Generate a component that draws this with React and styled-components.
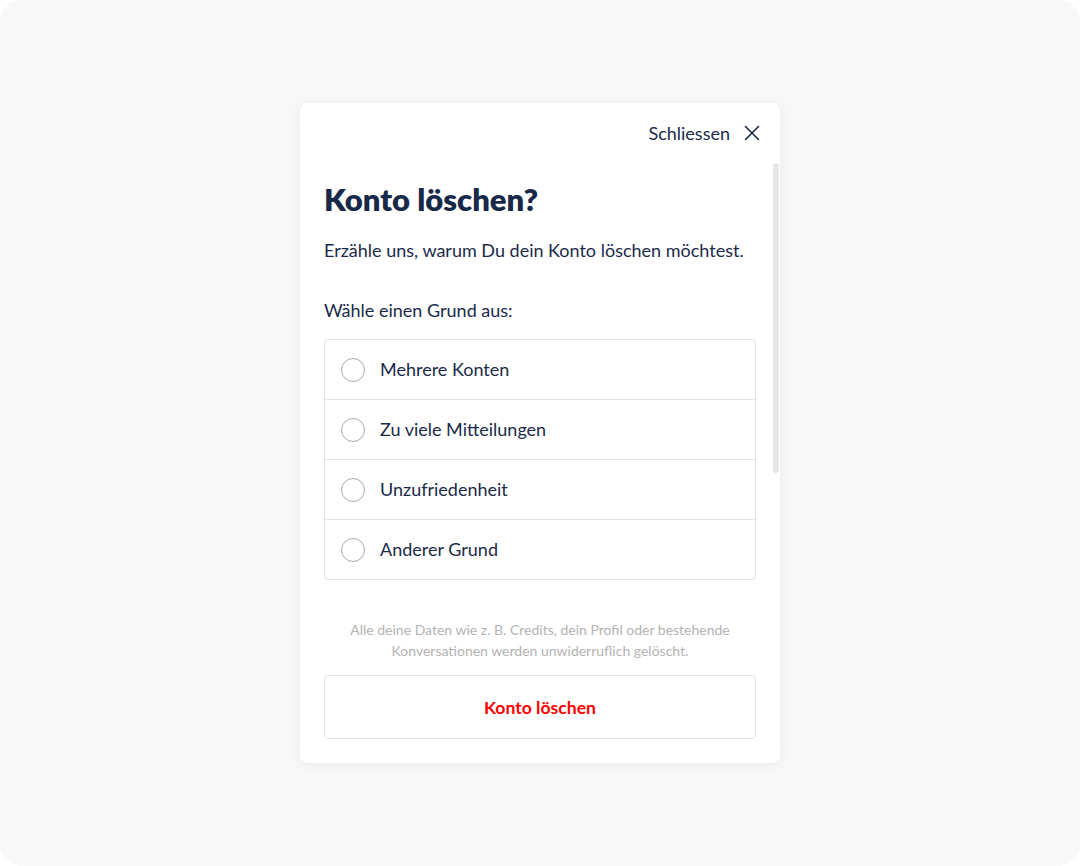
import React from "react";
import styled, { createGlobalStyle } from "styled-components";

const Global = createGlobalStyle`
  html, body { margin: 0; padding: 0; background: #ffffff; }
  body { font-family: "Lato", "Open Sans", sans-serif; -webkit-font-smoothing: antialiased; }
  * { box-sizing: border-box; }
`;

const Page = styled.div`
  width: 1080px;
  height: 866px;
  background: #f8f8f8;
  border-radius: 22px;
  display: flex;
  justify-content: center;
  align-items: flex-start;
  padding-top: 103px;
`;

const Modal = styled.div`
  position: relative;
  width: 480px;
  background: #ffffff;
  border-radius: 8px;
  box-shadow: 0 2px 12px rgba(0, 0, 0, 0.06);
  display: flex;
  flex-direction: column;
`;

const Header = styled.div`
  height: 60px;
  display: flex;
  align-items: center;
  justify-content: flex-end;
  padding-right: 20px;
  gap: 14px;
`;

const CloseLabel = styled.span`
  font-size: 18px;
  color: #1b2a4a;
`;

const Scrollbar = styled.div`
  position: absolute;
  right: 1px;
  top: 60px;
  width: 6px;
  height: 310px;
  border-radius: 3px;
  background: #e6e6e6;
`;

const Body = styled.div`
  padding: 16px 24px 24px 24px;
  display: flex;
  flex-direction: column;
`;

const Title = styled.h1`
  margin: 0;
  font-size: 31px;
  line-height: 40px;
  font-weight: 800;
  color: #172849;
`;

const Text = styled.p`
  margin: ${(p) => p.$mt || 0}px 0 0 0;
  font-size: 18px;
  line-height: 24px;
  color: #1b2a4a;
`;

const List = styled.div`
  margin-top: 17px;
  border: 1px solid #e3e3e3;
  border-radius: 4px;
  display: flex;
  flex-direction: column;
`;

const Row = styled.label`
  height: ${(p) => (p.$first ? 59 : 60)}px;
  display: flex;
  align-items: center;
  padding-left: 16px;
  gap: 15px;
  border-top: ${(p) => (p.$first ? "none" : "1px solid #e3e3e3")};
  cursor: pointer;
`;

const Radio = styled.span`
  width: 24px;
  height: 24px;
  border-radius: 50%;
  border: 1.5px solid #aaaaaa;
  flex: none;
`;

const RowLabel = styled.span`
  font-size: 18px;
  line-height: 22px;
  color: #1b2a4a;
  margin-top: -1px;
`;

const Note = styled.p`
  margin: 39px 0 0 0;
  text-align: center;
  font-size: 14px;
  line-height: 21px;
  color: #b3b3b3;
`;

const DeleteButton = styled.button`
  margin-top: 14px;
  height: 64px;
  width: 100%;
  background: #ffffff;
  border: 1px solid #e3e3e3;
  border-radius: 4px;
  font-family: inherit;
  font-size: 17.6px;
  font-weight: 700;
  color: #ff0000;
  cursor: pointer;
`;

const CloseIcon = () => (
  <svg width="16" height="16" viewBox="0 0 16 16" fill="none">
    <path d="M1.5 1.5 L14.5 14.5 M14.5 1.5 L1.5 14.5" stroke="#1b2a4a" strokeWidth="1.6" strokeLinecap="round" />
  </svg>
);

const reasons = ["Mehrere Konten", "Zu viele Mitteilungen", "Unzufriedenheit", "Anderer Grund"];

export default function App() {
  return (
    <>
      <Global />
      <Page>
        <Modal>
          <Header>
            <CloseLabel>Schliessen</CloseLabel>
            <CloseIcon />
          </Header>
          <Scrollbar />
          <Body>
            <Title>Konto löschen?</Title>
            <Text $mt={19}>Erzähle uns, warum Du dein Konto löschen möchtest.</Text>
            <Text $mt={36}>Wähle einen Grund aus:</Text>
            <List>
              {reasons.map((r, i) => (
                <Row key={r} $first={i === 0}>
                  <Radio />
                  <RowLabel>{r}</RowLabel>
                </Row>
              ))}
            </List>
            <Note>
              Alle deine Daten wie z. B. Credits, dein Profil oder bestehende
              <br />
              Konversationen werden unwiderruflich gelöscht.
            </Note>
            <DeleteButton>Konto löschen</DeleteButton>
          </Body>
        </Modal>
      </Page>
    </>
  );
}
